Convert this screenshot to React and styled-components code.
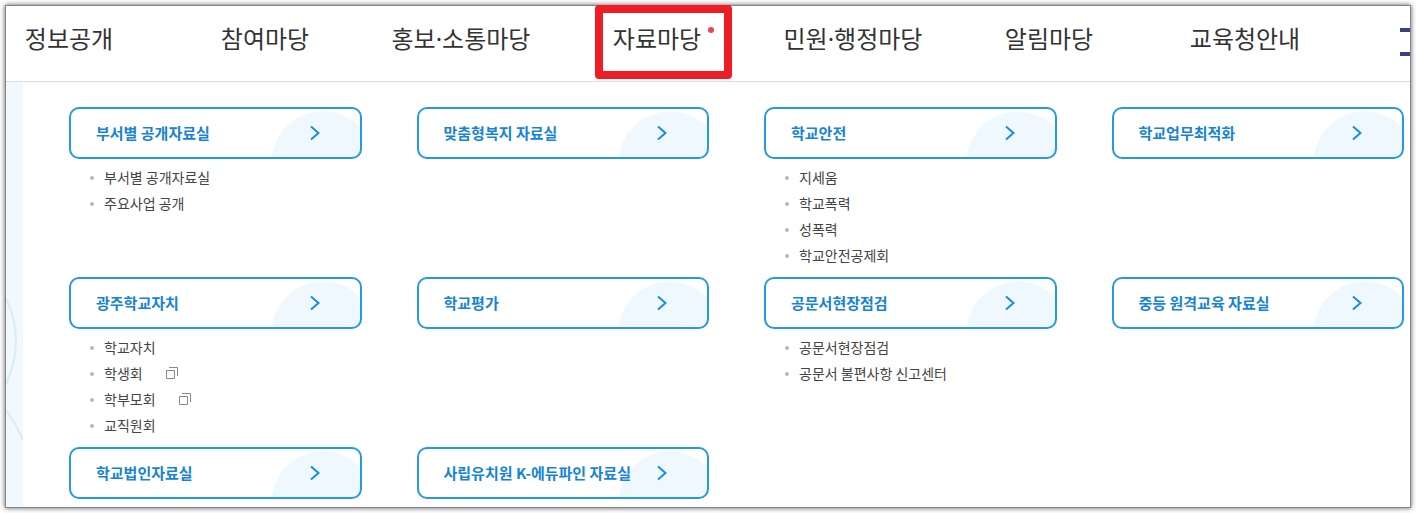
import styled, { createGlobalStyle } from "styled-components";

const menus = [
    { name: "정보공개" },
    { name: "참여마당" },
    { name: "홍보·소통마당" },
    { name: "자료마당", active: true },
    { name: "민원·행정마당" },
    { name: "알림마당" },
    { name: "교육청안내" },
];

const sections = [
    { title: "부서별 공개자료실", links: [{ name: "부서별 공개자료실" }, { name: "주요사업 공개" }] },
    { title: "맞춤형복지 자료실", links: [] },
    {
        title: "학교안전",
        links: [{ name: "지세움" }, { name: "학교폭력" }, { name: "성폭력" }, { name: "학교안전공제회" }],
    },
    { title: "학교업무최적화", links: [] },
    {
        title: "광주학교자치",
        links: [
            { name: "학교자치" },
            { name: "학생회", external: true },
            { name: "학부모회", external: true },
            { name: "교직원회" },
        ],
    },
    { title: "학교평가", links: [] },
    { title: "공문서현장점검", links: [{ name: "공문서현장점검" }, { name: "공문서 불편사항 신고센터" }] },
    { title: "중등 원격교육 자료실", links: [] },
    { title: "학교법인자료실", links: [] },
    { title: "사립유치원 K-에듀파인 자료실", links: [] },
];

function Arrow() {
    return (
        <ArrowIcon viewBox="0 0 10 16" aria-hidden="true">
            <path d="M1 1.500 8.500 8 1 14.500" />
        </ArrowIcon>
    );
}

function NewWindow() {
    return (
        <NewWindowIcon viewBox="0 0 12 12" role="img" aria-label="새창">
            <path d="M.5 3.500h8v8h-8zM3 .5h8.500V9" />
        </NewWindowIcon>
    );
}

export default function App() {
    return (
        <>
            <GlobalStyle />
            <Frame>
                <Header>
                    <Nav>
                        {menus.map(menu =>
                        <MenuItem key={menu.name}>
                            <MenuLink href="#" $active={menu.active}>{menu.name}</MenuLink>
                        </MenuItem>
                        )}
                    </Nav>
                    <MenuButton type="button" aria-label="전체메뉴">
                        <Bar />
                        <Bar />
                    </MenuButton>
                </Header>
                <Body>
                    <Side viewBox="0 0 17 425" preserveAspectRatio="xMinYMin slice" aria-hidden="true">
                        <path d="M0 217Q20 257 0 302M0 328Q10 342 17 358" />
                    </Side>
                    <Panel>
                        {sections.map(section =>
                        <section key={section.title}>
                            <Card href="#">
                                <CardTitle>{section.title}</CardTitle>
                                <Arrow />
                            </Card>
                            {section.links.length ?
                            <List>
                                {section.links.map(link =>
                                <Item key={link.name}>
                                    <SubLink href="#">
                                        {link.name}
                                        {link.external ? <NewWindow /> : ""}
                                    </SubLink>
                                </Item>
                                )}
                            </List>
                            :
                            ""
                            }
                        </section>
                        )}
                    </Panel>
                </Body>
            </Frame>
        </>
    );
}

const GlobalStyle = createGlobalStyle`
    *, *::before, *::after {
        box-sizing: border-box;
    }

    body {
        margin: 0;
        padding: 5px;
        background: #fff;
        font-family: "Noto Sans CJK KR", "Noto Sans", sans-serif;
    }

    a {
        color: inherit;
        text-decoration: none;
    }

    ul {
        margin: 0;
        padding: 0;
        list-style: none;
    }
`;

const Frame = styled.div`
    border: 1px solid #858585;
    background: #fff;
    box-shadow: 0 0 5px rgba(0, 0, 0, 0.65);
`;

const Header = styled.header`
    display: flex;
    height: 76px;
    border-bottom: 1px solid #dcdcdc;
`;

const Nav = styled.ul`
    flex: 1;
    display: grid;
    grid-template-columns: repeat(7, 1fr);
    margin: 0 57px 0 -35px;
    font-family: "Noto Sans", "Noto Sans CJK KR", sans-serif;
`;

const MenuItem = styled.li`
    display: flex;
    justify-content: center;
    align-items: flex-start;
    padding-top: 15px;
`;

const MenuLink = styled.a`
    position: relative;
    font-size: 24px;
    line-height: 36px;
    color: #333;
    white-space: nowrap;

    &::before {
        content: ${props => props.$active ? '""' : 'none'};
        position: absolute;
        top: -16px;
        left: -18px;
        right: -31px;
        height: 74px;
        border: 8px solid #ee1c24;
        border-radius: 4px;
    }

    &::after {
        content: ${props => props.$active ? '""' : 'none'};
        position: absolute;
        top: 6px;
        right: -13px;
        width: 6px;
        height: 6px;
        border-radius: 50%;
        background: #e5474b;
    }
`;

const MenuButton = styled.button`
    display: flex;
    flex-direction: column;
    gap: 20px;
    width: 10px;
    padding: 22px 0 0;
    border: 0;
    background: none;
`;

const Bar = styled.span`
    width: 100%;
    height: 4px;
    background: #3b3f85;
`;

const Body = styled.div`
    display: flex;
`;

const Side = styled.svg`
    flex: none;
    width: 17px;
    height: 425px;
    background: #f0f9ff;
    fill: none;
    stroke: #d9ecf6;
    stroke-width: 2;
`;

const Panel = styled.main`
    flex: 1;
    display: grid;
    grid-template-columns: repeat(4, 1fr);
    align-content: start;
    gap: 8px 55px;
    padding: 25px 6px 0 46px;
`;

const Card = styled.a`
    display: flex;
    justify-content: space-between;
    align-items: center;
    height: 52px;
    padding: 0 40px 0 25px;
    border: 2px solid #2799e3;
    border-radius: 10px;
    background: radial-gradient(circle 52px at calc(100% - 37px) 54px, #eff8ff 51px, transparent 52px);
    font-size: 15px;
    font-weight: 700;
    color: #1583d6;
    white-space: nowrap;
`;

const CardTitle = styled.span`
    padding-bottom: 2px;
`;

const ArrowIcon = styled.svg`
    width: 10px;
    height: 16px;
    fill: none;
    stroke: #1a8cdb;
    stroke-width: 2;
`;

const List = styled.ul`
    padding: 6px 0 0 21px;
`;

const Item = styled.li`
    display: flex;
    align-items: center;
    gap: 10px;
    height: 26px;
    font-size: 14px;
    color: #444;

    &::before {
        content: "";
        width: 4px;
        height: 4px;
        border-radius: 50%;
        background: #b8b8b8;
    }
`;

const SubLink = styled.a`
    display: flex;
    align-items: center;
    gap: 23px;
    padding-bottom: 2px;
    white-space: nowrap;
`;

const NewWindowIcon = styled.svg`
    width: 12px;
    height: 12px;
    fill: none;
    stroke: #888;
`;
